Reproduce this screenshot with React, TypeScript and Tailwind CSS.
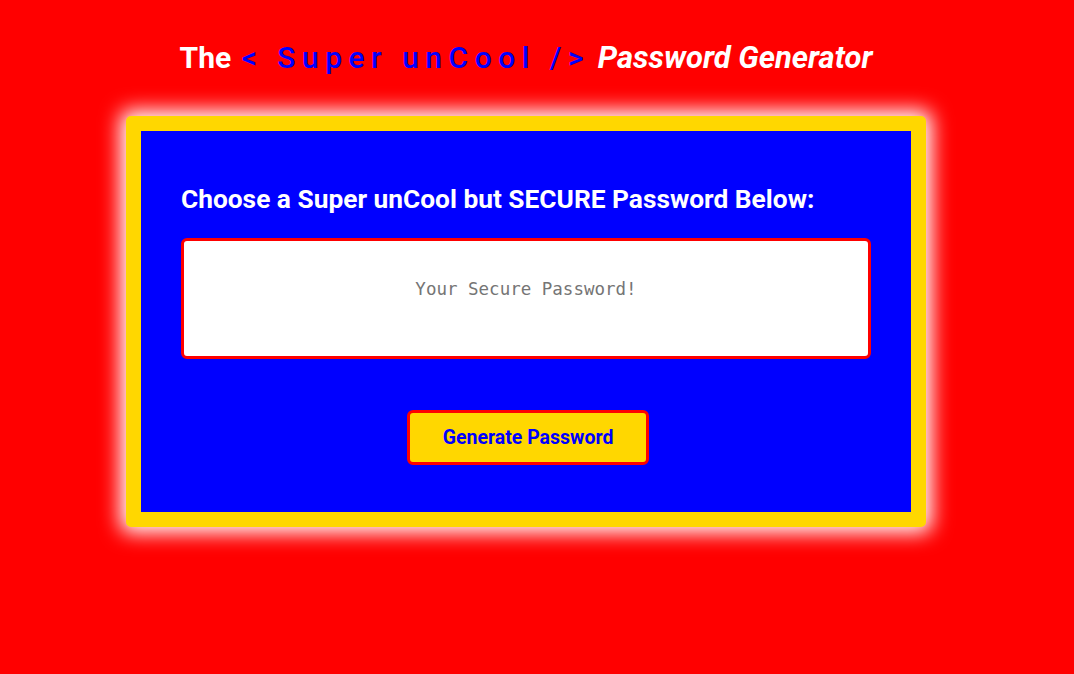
import React from 'react';

const App: React.FC = () => {
    return (
        <div className="min-h-[674px] w-full bg-[#ff0000] pt-[38px] font-['Roboto',sans-serif]">
            <div className="w-[1052px]">
                {/* Header */}
                <h1 className="flex justify-center items-baseline h-[40px] text-[30px] font-bold text-white whitespace-pre leading-[40px]">
                    <span className="mr-[3px]">The </span>
                    <span className="text-[#0000ff] font-medium tracking-[6.5px]">{'< Super unCool />'}</span>
                    <span className="italic text-[31px]"> Password Generator</span>
                </h1>

                {/* Card */}
                <div className="mx-auto mt-[38px] w-[800px] h-[411px] bg-[#0000ff] border-[15px] border-[#ffd700] rounded-[5px] shadow-[0_0_20px_6px_white] px-[40px] pt-[52px]">
                    <h2 className="text-[26.3px] font-bold text-white leading-[32px]">
                        Choose a Super unCool but SECURE Password Below:
                    </h2>
                    <textarea
                        readOnly
                        placeholder="Your Secure Password!"
                        className="mt-[23px] block w-full h-[121px] bg-white border-[3px] border-[#ff0000] rounded-[6px] resize-none text-center pt-[35px] text-[17.5px] font-['DejaVu_Sans_Mono',monospace] placeholder:text-[#757575] outline-none"
                    />
                    <div className="flex justify-center mt-[51px] ml-[4px]">
                        <button className="w-[242px] h-[55px] bg-[#ffd700] border-[3px] border-[#ff0000] rounded-[6px] text-[#0000ff] font-bold text-[19.5px]">
                            Generate Password
                        </button>
                    </div>
                </div>
            </div>
        </div>
    );
};

export default App;
